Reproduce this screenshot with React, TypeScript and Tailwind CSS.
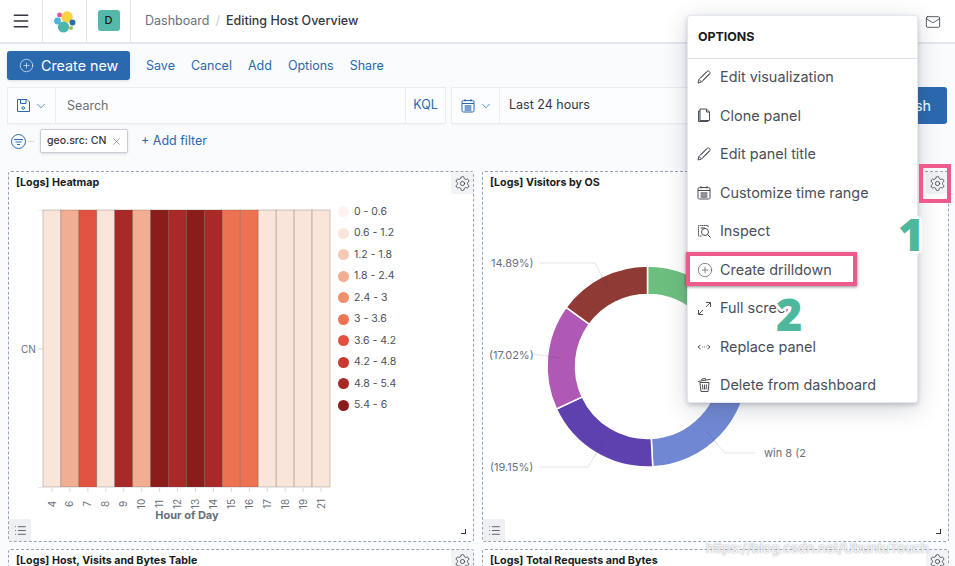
import { Settings, Mail, Menu, ChevronDown, CirclePlus, X, List } from "lucide-react";

const font = "font-['Inter',_'Liberation_Sans',_sans-serif]";

const C = { a: "#F9E5DA", b: "#F2AE92", c: "#E25240", d: "#A82926", e: "#8A1C1B", f: "#EC7252" };
const cols = [
  ["4", C.a], ["6", C.b], ["7", C.c], ["8", C.a], ["9", C.d], ["10", C.b], ["11", C.e], ["12", C.d],
  ["13", C.e], ["14", C.d], ["15", C.f], ["16", C.f], ["17", C.a], ["18", C.a], ["19", C.a], ["21", C.a],
];

const legend = [
  ["0 - 0.6", "#FCF2EE"], ["0.6 - 1.2", "#F9E5DA"], ["1.2 - 1.8", "#F6C9B5"], ["1.8 - 2.4", "#F2AE92"], ["2.4 - 3", "#F0916E"],
  ["3 - 3.6", "#EE7454"], ["3.6 - 4.2", "#E25240"], ["4.2 - 4.8", "#C9392F"], ["4.8 - 5.4", "#A82926"], ["5.4 - 6", "#8A1C1B"],
];

function arc(a0: number, a1: number, color: string) {
  const cx = 647.5, cy = 366.5, R = 100.5, r = 72;
  const p = (rad: number, a: number) => {
    const t = (a * Math.PI) / 180;
    return `${(cx + rad * Math.sin(t)).toFixed(2)} ${(cy - rad * Math.cos(t)).toFixed(2)}`;
  };
  const large = a1 - a0 > 180 ? 1 : 0;
  const d = `M${p(R, a0)}A${R} ${R} 0 ${large} 1 ${p(R, a1)}L${p(r, a1)}A${r} ${r} 0 ${large} 0 ${p(r, a0)}Z`;
  return <path key={a0} d={d} fill={color} stroke="#fff" strokeWidth="1.5" />;
}

function Heatmap() {
  const w = 287 / 16;
  return (
    <svg className="block w-[328px] h-[340px] shrink-0" viewBox="9 195 328 340">
      <line x1="38" x2="330" y1="210.5" y2="210.5" stroke="#EEF0F3" />
      <line x1="38" x2="43" y1="349" y2="349" stroke="#D3DAE6" />
      <text x="21" y="352.5" fontSize="10" fill="#69707D">CN</text>
      {cols.map(([l, c], i) => (
        <rect key={l} x={43 + i * w} y="210" width={w} height="277" fill={c} stroke="#6a5048" strokeOpacity="0.38" strokeWidth="0.8" />
      ))}
      <line x1="38" x2="330" y1="487.5" y2="487.5" stroke="#E4E7EC" />
      {cols.map(([l], i) => {
        const x = 52 + i * w;
        return (
          <g key={l}>
            <line x1={x} x2={x} y1="488" y2="492" stroke="#D3DAE6" />
            <text transform={`translate(${x + 3.5} 504) rotate(-90)`} fontSize="10" fill="#69707D" textAnchor="middle">{l}</text>
          </g>
        );
      })}
      <text x="187" y="519" fontSize="11" fontWeight="700" fill="#69707D" textAnchor="middle">Hour of Day</text>
    </svg>
  );
}

function Donut() {
  const line = "#E3E5E8";
  const inner = "rgba(70,70,80,0.22)";
  return (
    <svg className="block w-[464px] h-[340px]" viewBox="483 195 464 340">
      {arc(0, 90, "#6DBF80")}
      {arc(90, 177, "#7088D3")}
      {arc(177, 245, "#5E40AE")}
      {arc(245, 306, "#AF59B4")}
      {arc(306, 360, "#8F3A35")}
      <polyline points="540,263 595,263 601,275" fill="none" stroke={line} />
      <polyline points="601,275 608,289" fill="none" stroke={inner} />
      <polyline points="532,354 547,356" fill="none" stroke={line} />
      <polyline points="547,356 561,358" fill="none" stroke={inner} />
      <polyline points="540,467 588,467 594,457" fill="none" stroke={line} />
      <polyline points="594,457 603,442" fill="none" stroke={inner} />
      <polyline points="717,444 725,453 755,453" fill="none" stroke={line} />
      <polyline points="707,432 717,444" fill="none" stroke={inner} />
      <text x="491" y="267" fontSize="11" fill="#69707D">14.89%)</text>
      <text x="489" y="359" fontSize="11" fill="#69707D">(17.02%)</text>
      <text x="490" y="471" fontSize="11" fill="#69707D">(19.15%)</text>
      <text x="764" y="457" fontSize="11" fill="#69707D">win 8 (2</text>
    </svg>
  );
}

function Panel({ title, children, h }: { title: string; children?: React.ReactNode; h: string }) {
  return (
    <div className={`relative bg-white border border-dashed border-[#98A2B3] rounded-[3px] ${h}`}>
      <div className="h-[23px] pl-[7px] pt-[4px] text-[10.7px] leading-[14px] font-bold text-[#1A1C21]">{title}</div>
      {children}
      <div className="absolute right-0 top-0 w-[22px] h-[22px] bg-[#F1F3F6] rounded-bl-[3px] flex items-center justify-center">
        <Settings size={17} strokeWidth={1.1} className="text-[#343741]" />
      </div>
    </div>
  );
}

function PanelFoot() {
  return (
    <>
      <div className="absolute left-0 bottom-0 w-[22px] h-[22px] bg-[#EEF0F3] rounded-tr-[3px] flex items-center justify-center">
        <List size={13} strokeWidth={1.4} className="text-[#343741]" />
      </div>
      <div className="absolute right-[7px] bottom-[7px] w-[5px] h-[5px] border-r border-b border-[#343741]" />
    </>
  );
}

const stroke = "#4A4F5A";

function PencilIcon() {
  return (
    <svg width="14" height="14" viewBox="0 0 14 14" fill="none" stroke={stroke} strokeWidth="1">
      <path d="M1 13l1-3.6L10 1.4a1.6 1.6 0 0 1 2.3 0l.3.3a1.6 1.6 0 0 1 0 2.3L4.6 12z" />
      <path d="M2 9.4L4.6 12M3.6 8L9.9 1.7M5.9 10.3l6.3-6.3" />
    </svg>
  );
}
function CloneIcon() {
  return (
    <svg width="14" height="15" viewBox="0 0 14 15" fill="none" stroke={stroke} strokeWidth="1">
      <path d="M3 3H1.5v10.5H11V12" fill="#C9CDD4" />
      <path d="M3 1h6.5l3 3v8.5H3z" fill="#fff" />
      <path d="M9.5 1v3h3" />
    </svg>
  );
}
function InspectIcon() {
  return (
    <svg width="15" height="15" viewBox="0 0 15 15" fill="none" stroke={stroke} strokeWidth="1">
      <path d="M4.5 12H1.5V1.5H11V3.5" strokeDasharray="1.6 0.5" />
      <path d="M3.5 4H8" />
      <circle cx="8" cy="8" r="3.5" />
      <path d="M10.7 10.7l3 3" />
    </svg>
  );
}
function ExpandIcon() {
  return (
    <svg width="15" height="15" viewBox="0 0 15 15" fill="none" stroke={stroke} strokeWidth="1">
      <path d="M2 13L6 9M9 6l4-4M9 1.5h4.5V6M1.5 9v4.5H6" />
    </svg>
  );
}
function ReplaceIcon() {
  return (
    <svg width="14" height="14" viewBox="0 0 14 14" fill="none" stroke={stroke} strokeWidth="1">
      <path d="M3.5 5L1 7l2.5 2M10.5 5L13 7l-2.5 2M5 7h.8M7 7h.8M9 7h.6" />
    </svg>
  );
}
function TrashIcon() {
  return (
    <svg width="15" height="16" viewBox="0 0 15 16" fill="none" stroke={stroke} strokeWidth="1">
      <path d="M1 4.5l12.5-2.2M5 3.6l-.3-1.5 3.6-.7.3 1.5" />
      <path d="M2.5 5.5h9.5V6l-1 8.5H4L3 6" />
      <path d="M5.5 7.5l.4 5M7.5 7.5v5M9.5 7.5l-.4 5" />
    </svg>
  );
}
function CalIcon({ color = stroke }: { color?: string }) {
  return (
    <svg width="14" height="15" viewBox="0 0 14 15" fill="none" stroke={color} strokeWidth="1">
      <rect x="1" y="2.5" width="12" height="11.5" rx="1.5" />
      <path d="M1 5.5h12M4 1v2.5M10 1v2.5M3.5 8h7M3.5 10h7M3.5 12h7" />
      <path d="M5 7.5v5M7 7.5v5M9 7.5v5" strokeDasharray="1 1" />
    </svg>
  );
}
function SaveIcon() {
  return (
    <svg width="15" height="15" viewBox="0 0 15 15" fill="none" stroke="#2B69AF" strokeWidth="1">
      <path d="M1.5 1.5h9.5l2.5 2.5v9.5h-12z" />
      <path d="M4.5 1.5v4h5.5v-4" />
      <circle cx="7.2" cy="10" r="1.3" />
    </svg>
  );
}

const menu: [React.ReactNode, string][] = [
  [<PencilIcon />, "Edit visualization"],
  [<CloneIcon />, "Clone panel"],
  [<PencilIcon />, "Edit panel title"],
  [<CalIcon />, "Customize time range"],
  [<InspectIcon />, "Inspect"],
  [<CirclePlus size={16} strokeWidth={1} color={stroke} />, "Create drilldown"],
  [<ExpandIcon />, "Full screen"],
  [<ReplaceIcon />, "Replace panel"],
  [<TrashIcon />, "Delete from dashboard"],
];

function Logo() {
  return (
    <svg width="24" height="24" viewBox="53 8 24 24">
      <circle cx="67" cy="16" r="5.8" fill="#FBD23F" />
      <circle cx="59.5" cy="14" r="2.4" fill="#E0559A" />
      <circle cx="57.5" cy="20" r="3.4" fill="#4FB4DC" />
      <circle cx="63.5" cy="26" r="5.6" fill="#4DB6AC" />
      <circle cx="72.5" cy="21.5" r="3" fill="#2A6FA8" />
      <circle cx="71" cy="27" r="2" fill="#9CC53D" />
    </svg>
  );
}

const numStyle =
  "absolute font-extrabold text-[45px] leading-none text-[#4DB89E] font-['Open_Sans',_sans-serif] [text-shadow:3px_0_0_#fff,-3px_0_0_#fff,0_3px_0_#fff,0_-3px_0_#fff,2px_2px_0_#fff,-2px_-2px_0_#fff,2px_-2px_0_#fff,-2px_2px_0_#fff]";

export default function App() {
  return (
    <div className={`${font} relative w-[955px] h-[566px] overflow-hidden bg-[#FAFBFD] text-[#343741]`}>
      {/* top bar */}
      <header className="h-[44px] bg-white border-b-2 border-[#E4E7EF] flex items-stretch">
        <div className="w-[43px] border-r border-[#E4E7EF] flex items-center justify-center">
          <Menu size={20} strokeWidth={1.8} className="text-[#343741] -mt-[1px]" />
        </div>
        <div className="w-[44px] border-r border-[#E4E7EF] flex items-center justify-center -mt-[1px]">
          <Logo />
        </div>
        <div className="w-[44px] border-r border-[#E4E7EF] flex items-center justify-center pb-[1px]">
          <div className="w-[22px] h-[21px] rounded-[3px] bg-[#54B9AB] flex items-center justify-center text-[11px] font-medium text-[#1A1C21]">D</div>
        </div>
        <div className="flex items-center pl-[14px] text-[12.5px]">
          <span className="text-[#69707D]">Dashboard</span>
          <span className="text-[#C9CED6] mx-[6px]">/</span>
          <span className="font-medium text-[#343741]">Editing Host Overview</span>
        </div>
        <div className="ml-auto pr-[14px] pt-[14px]">
          <Mail size={16} strokeWidth={1.2} className="text-[#343741]" />
        </div>
      </header>

      {/* toolbar */}
      <div className="pt-[7px] pl-[7px] pr-[7px] flex items-center h-[36px]">
        <button className="w-[123px] h-[29px] bg-[#2B69AF] rounded-[3px] text-white text-[14.3px] flex items-center pl-[12px] shadow-sm">
          <CirclePlus size={15} strokeWidth={1} className="mr-[7px]" />
          Create new
        </button>
        <nav className="flex ml-[16px] gap-[16px] text-[12.5px] text-[#2B69AF] pt-[2px]">
          <span>Save</span>
          <span>Cancel</span>
          <span>Add</span>
          <span>Options</span>
          <span>Share</span>
        </nav>
      </div>

      {/* search */}
      <div className="mt-[8px] mx-[8px] flex h-[35px] gap-[7px]">
        <div className="w-[437px] flex bg-[#FCFDFE] shadow-[0_0_0_1px_#E9ECF1,0_2px_2px_-1px_#E4E7EF] text-[12.5px]">
          <div className="w-[48px] border-r border-[#E9ECF1] flex items-center pl-[8px] gap-[3px] text-[#2B69AF]">
            <SaveIcon />
            <ChevronDown size={14} strokeWidth={1.3} />
          </div>
          <div className="flex-1 flex items-center pl-[11px] pt-[2px] text-[#69707D]">Search</div>
          <div className="w-[40px] border-l border-[#E9ECF1] flex items-center justify-center text-[#2B69AF]">KQL</div>
        </div>
        <div className="flex-1 flex bg-[#FCFDFE] shadow-[0_0_0_1px_#E9ECF1,0_2px_2px_-1px_#E4E7EF] text-[12.5px]">
          <div className="w-[48px] border-r border-[#E9ECF1] flex items-center pl-[9px] gap-[4px] text-[#2B69AF]">
            <CalIcon color="#2B69AF" />
            <ChevronDown size={14} strokeWidth={1.3} />
          </div>
          <div className="flex items-center pl-[9px] text-[#343741]">Last 24 hours</div>
        </div>
        <button className="w-[84px] -my-[1px] bg-[#2B69AF] rounded-[3px] text-white text-[14.3px] flex items-center justify-center ml-[2px]">Refresh</button>
      </div>

      {/* filters */}
      <div className="mt-[6px] ml-[11px] h-[24px] flex items-center">
        <svg width="15" height="15" viewBox="0 0 15 15" fill="none" stroke="#2B69AF" strokeWidth="1">
          <circle cx="7.5" cy="7.5" r="7" />
          <path d="M3 5.5h9M4.5 8h6M6 10.5h3" />
        </svg>
        <div className="w-[6px] h-px bg-[#D3DAE6] ml-[2px] mr-[6px]" />
        <div className="w-[88px] h-[24px] bg-white border border-[#C9CED6] rounded-[2px] shadow-sm flex items-center pl-[6px] text-[10.5px] font-medium">
          geo.src: CN
          <X size={11} strokeWidth={1} className="ml-[5px]" />
        </div>
        <span className="ml-[13px] text-[12.5px] text-[#2B69AF]">+ Add filter</span>
      </div>

      {/* panels */}
      <main className="mt-[18px] px-[8px] grid grid-cols-[466px_467px] gap-x-[8px] gap-y-[7px]">
        <Panel title="[Logs] Heatmap" h="h-[371px]">
          <div className="flex">
            <Heatmap />
            <ul className="pt-[6px] pl-[1px] text-[10.5px] text-[#4A4F5A]">
              {legend.map(([l, c]) => (
                <li key={l} className="h-[21.5px] flex items-center">
                  <span className="w-[11px] h-[11px] rounded-full mr-[5px]" style={{ backgroundColor: c }} />
                  {l}
                </li>
              ))}
            </ul>
          </div>
          <PanelFoot />
        </Panel>
        <Panel title="[Logs] Visitors by OS" h="h-[371px]">
          <Donut />
          <PanelFoot />
        </Panel>
        <Panel title="[Logs] Host, Visits and Bytes Table" h="h-[60px]" />
        <Panel title="[Logs] Total Requests and Bytes" h="h-[60px]" />
      </main>

      {/* options popover */}
      <div className="absolute left-[687px] top-[15px] w-[231px] h-[388px] bg-white rounded-[3px] border border-[#E4E7EF] shadow-[0_6px_24px_rgba(60,70,90,0.22),0_2px_4px_rgba(60,70,90,0.25)]">
        <div className="h-[43px] border-b border-[#DDE1EA] flex items-center pl-[10px] text-[12.4px] font-bold text-[#1A1C21]">OPTIONS</div>
        <ul className="-mt-[1px]">
          {menu.map(([icon, label]) => (
            <li key={label} className="h-[38.5px] flex items-center pl-[9px] text-[14.4px] text-[#4A4F5A]">
              <span className="w-[23px] flex items-center">{icon}</span>
              {label}
            </li>
          ))}
        </ul>
      </div>

      {/* annotations */}
      <div className="absolute left-[686px] top-[252px] w-[171px] h-[34px] border-[4px] border-[#EE5A8C] shadow-[0_1px_3px_rgba(0,0,0,0.45)]" />
      <div className="absolute left-[919px] top-[164px] w-[32px] h-[39px] border-[4px] border-[#EE5A8C]" />
      <div className={`${numStyle} left-[898px] top-[211px]`}>1</div>
      <div className={`${numStyle} left-[776px] top-[291px]`}>2</div>
      <div className="absolute left-[706px] top-[538px] text-[13.5px] text-white/90 [text-shadow:0_0_1.5px_#7d838c]">https://blog.csdn.net/UbuntuTouch</div>
    </div>
  );
}
